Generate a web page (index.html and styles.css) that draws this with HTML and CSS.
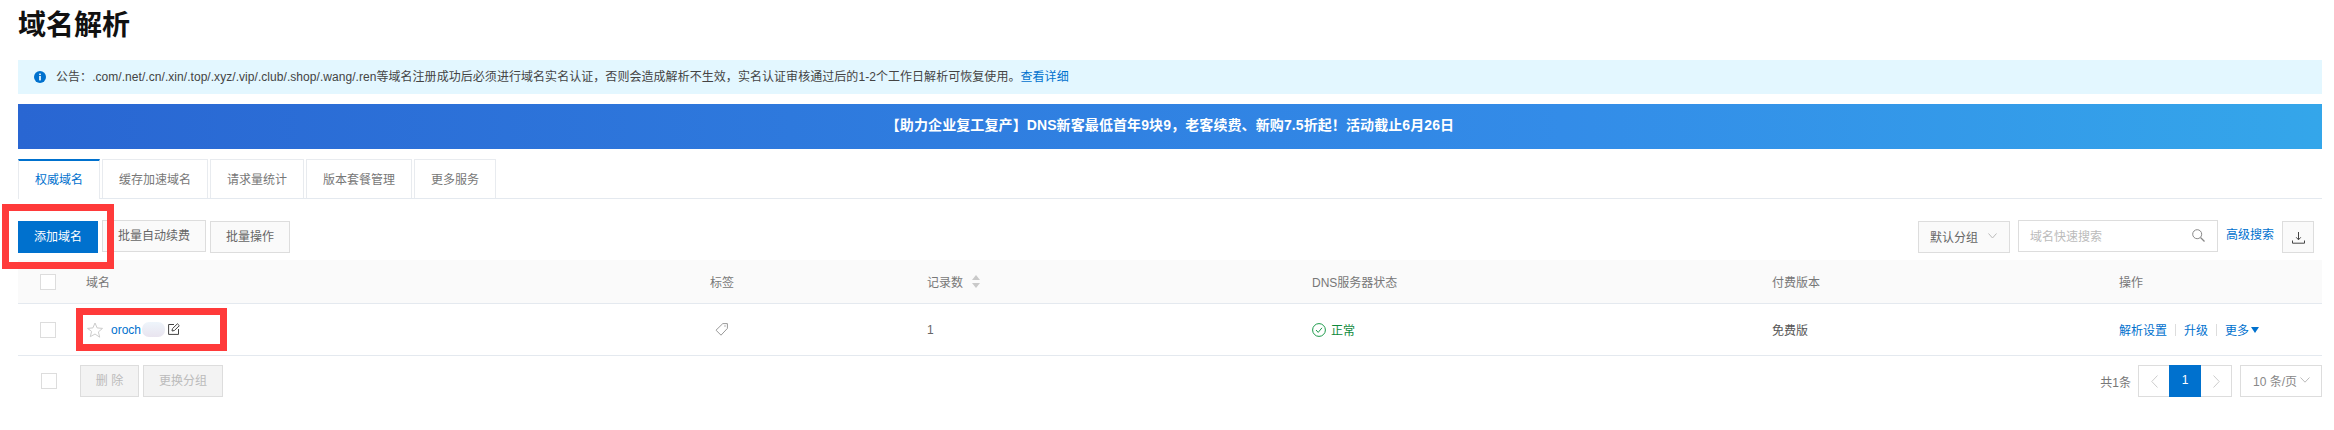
FILE: index.html
```html
<!DOCTYPE html>
<html lang="zh-CN">
<head>
<meta charset="utf-8">
<title>域名解析</title>
<link rel="stylesheet" href="styles.css">
</head>
<body>
<main class="page">
  <h1 class="title">域名解析</h1>

  <div class="notice">
    <svg class="notice-icon" width="12" height="12" viewBox="0 0 12 12"><circle cx="6" cy="6" r="6" fill="#0071ce"/><rect x="5.2" y="5" width="1.6" height="4.4" fill="#fff"/><rect x="5.2" y="2.6" width="1.6" height="1.5" fill="#fff"/></svg>
    <span>公告：.com/.net/.cn/.xin/.top/.xyz/.vip/.club/.shop/.wang/.ren等域名注册成功后必须进行域名实名认证，否则会造成解析不生效，实名认证审核通过后的1-2个工作日解析可恢复使用。<a class="link" href="#">查看详细</a></span>
  </div>

  <div class="banner">【助力企业复工复产】DNS新客最低首年9块9，老客续费、新购7.5折起！活动截止6月26日</div>

  <nav class="tabs">
    <a class="tab tab-active" href="#">权威域名</a>
    <a class="tab" href="#">缓存加速域名</a>
    <a class="tab" href="#">请求量统计</a>
    <a class="tab" href="#">版本套餐管理</a>
    <a class="tab" href="#">更多服务</a>
  </nav>

  <div class="toolbar">
    <button class="btn btn-primary">添加域名</button>
    <button class="btn btn-raised">批量自动续费</button>
    <button class="btn">批量操作</button>
    <div class="toolbar-right">
      <div class="select select-group">
        <span>默认分组</span>
        <svg width="9" height="6" viewBox="0 0 9 6"><path d="M.5.5l4 4.5 4-4.5" fill="none" stroke="#bbb"/></svg>
      </div>
      <div class="search">
        <span>域名快速搜索</span>
        <svg width="13" height="13" viewBox="0 0 13 13"><circle cx="5.2" cy="5.2" r="4.5" fill="none" stroke="#888"/><path d="M8.5 8.5l4 4" stroke="#888" stroke-width="1.2"/></svg>
      </div>
      <a class="link adv" href="#">高级搜索</a>
      <button class="btn btn-icon">
        <svg width="13" height="13" viewBox="0 0 13 13"><path d="M6.5 1v7.5M4.2 6.3l2.3 2.5 2.3-2.5" fill="none" stroke="#444"/><path d="M.5 9.5v2.7h12V9.5" fill="none" stroke="#444"/></svg>
      </button>
    </div>
  </div>

  <div class="table">
    <div class="row row-head">
      <span class="checkbox"></span>
      <span>域名</span>
      <span>标签</span>
      <span class="sortable">记录数
        <svg width="8" height="13" viewBox="0 0 8 13"><path d="M4 0l4 5H0zM4 13L0 8h8z" fill="#c9c9c9"/></svg>
      </span>
      <span>DNS服务器状态</span>
      <span>付费版本</span>
      <span>操作</span>
    </div>
    <div class="row row-body">
      <span class="checkbox"></span>
      <span class="domain">
        <svg width="16" height="16" viewBox="0 0 16 16"><path d="M8 1l2.1 4.9 5.4.5-4.1 3.5 1.3 5.3L8 12l-4.7 2.7 1.3-5.3L.5 6.4l5.4-.5z" fill="none" stroke="#ccc"/></svg>
        <a class="link domain-name" href="#">oroch</a>
        <span class="masked"></span>
        <svg class="edit-icon" width="12" height="12" viewBox="0 0 12 12"><path d="M6 1.5H.6v9.9h9.9V6" fill="none" stroke="#444"/><path d="M4 8l.5-2.4L9.4.8l1.9 1.9L6.4 7.5z" fill="none" stroke="#444"/></svg>
      </span>
      <span class="cell-icon">
        <svg width="13" height="13" viewBox="0 0 13 13"><path d="M7.8.6h4.6v4.8L6 12.2 1 7.2z" fill="none" stroke="#999"/><circle cx="10" cy="3" r=".7" fill="#999"/></svg>
      </span>
      <span>1</span>
      <span class="status">
        <svg width="14" height="14" viewBox="0 0 14 14"><circle cx="7" cy="7" r="6.4" fill="none" stroke="#1c9a4a"/><path d="M4 7l2.2 2.4L10 4.8" fill="none" stroke="#1c9a4a"/></svg>
        正常
      </span>
      <span class="plan">免费版</span>
      <span class="ops">
        <a class="link" href="#">解析设置</a><i class="sep"></i><a class="link" href="#">升级</a><i class="sep"></i><a class="link more" href="#">更多<svg width="8" height="6" viewBox="0 0 8 6"><path d="M0 0h8L4 6z" fill="#0071ce"/></svg></a>
      </span>
    </div>
  </div>

  <div class="footer">
    <span class="checkbox"></span>
    <button class="btn btn-disabled btn-delete">删 除</button>
    <button class="btn btn-disabled">更换分组</button>
    <div class="pager">
      <span class="total">共1条</span>
      <div class="pages">
        <span class="page-arrow"><svg width="7" height="13" viewBox="0 0 7 13"><path d="M6.5.5L.8 6.5l5.7 6" fill="none" stroke="#ccc"/></svg></span>
        <span class="page-num">1</span>
        <span class="page-arrow"><svg width="7" height="13" viewBox="0 0 7 13"><path d="M.5.5l5.7 6-5.7 6" fill="none" stroke="#ccc"/></svg></span>
      </div>
      <div class="select select-size">
        <span>10 条/页</span>
        <svg width="10" height="6" viewBox="0 0 10 6"><path d="M.5.5L5 5.2 9.5.5" fill="none" stroke="#bbb"/></svg>
      </div>
    </div>
  </div>

  <div class="mark mark-add"></div>
  <div class="mark mark-domain"></div>
</main>
</body>
</html>
```

FILE: styles.css
```css
* { box-sizing: border-box; }

html, body { margin: 0; background: #fff; }

body {
  font-family: "Liberation Sans", "Noto Sans CJK SC", sans-serif;
  font-size: 12px;
  color: #666;
}

.page {
  position: relative;
  padding: 0 12px 0 18px;
  height: 430px;
  overflow: hidden;
}

.title {
  margin: 0 0 11px;
  height: 49px;
  font-size: 28px;
  line-height: 51px;
  font-weight: 700;
  color: #111;
}

.link { color: #0071ce; text-decoration: none; }

.notice {
  display: flex;
  align-items: center;
  gap: 10px;
  height: 34px;
  padding-left: 16px;
  background: #e3f7ff;
  color: #444;
  line-height: 32px;
  letter-spacing: .05px;
}

.banner {
  margin-top: 10px;
  height: 45px;
  line-height: 43px;
  text-align: center;
  font-size: 14px;
  font-weight: 700;
  letter-spacing: .1px;
  color: #fff;
  background: linear-gradient(90deg, #2966d2 0%, #338ce8 67%, #34a6ea 100%);
}

.tabs {
  display: flex;
  gap: 2px;
  margin-top: 10px;
  height: 40px;
  border-bottom: 1px solid #e4e9ef;
}

.tab {
  height: 39px;
  padding: 0 16px;
  line-height: 40px;
  border: 1px solid #e8ebef;
  border-bottom: 0;
  color: #777;
  text-decoration: none;
}

.tab-active {
  height: 40px;
  border-top: 2px solid #0071ce;
  line-height: 38px;
  background: #fff;
  color: #0071ce;
}

.toolbar {
  display: flex;
  gap: 4px;
  margin-top: 21px;
  height: 33px;
  padding-top: 1px;
}

.btn {
  width: 80px;
  height: 32px;
  padding: 0 0 3px;
  border: 1px solid #ddd;
  background: #fafafa;
  color: #666;
  font: inherit;
}

.btn-primary { border-color: #0071ce; background: #0071ce; color: #fff; }
.btn-raised { width: 104px; margin-top: -1px; }
.btn-icon { display: flex; align-items: center; justify-content: center; width: 32px; padding: 0; }

.toolbar-right {
  display: flex;
  align-items: flex-start;
  margin-left: auto;
  margin-right: 8px;
}

.select {
  display: flex;
  align-items: center;
  height: 32px;
  border: 1px solid #ddd;
}

.select-group {
  justify-content: space-between;
  width: 92px;
  padding: 0 12px 2px 11px;
  background: #fafafa;
}

.search {
  display: flex;
  align-items: center;
  justify-content: space-between;
  width: 200px;
  height: 32px;
  margin: -1px 0 0 8px;
  padding: 0 12px 2px 11px;
  border: 1px solid #ddd;
  color: #bbb;
}

.adv { margin: 0 8px; line-height: 28px; }

.table { margin-top: 7px; }

.row {
  display: grid;
  grid-template-columns: 68px 624px 217px 385px 460px 347px 203px;
  align-items: center;
  border-bottom: 1px solid #e4e9ef;
}

.row-head { height: 44px; background: #fafafa; color: #777; }
.row-body { height: 52px; }

.checkbox {
  display: block;
  width: 16px;
  height: 16px;
  margin-left: 22px;
  border: 1px solid #ddd;
  background: #fff;
}

.sortable { display: flex; align-items: center; gap: 9px; }
.cell-icon { display: flex; padding-left: 5px; }

.domain {
  display: flex;
  align-items: center;
  grid-column: 2;
  margin-left: 1px;
}

.domain-name { margin-left: 8px; margin-right: 1px; }

.masked {
  width: 23px;
  height: 15px;
  margin-right: 3px;
  border-radius: 7px;
  background: linear-gradient(180deg, #eef5fb, #e9e4ef);
}

.edit-icon { margin-bottom: 2px; }

.status { display: flex; align-items: center; gap: 5px; color: #0f8a3c; }
.plan { color: #555; }

.ops { display: flex; align-items: center; }

.sep {
  width: 1px;
  height: 12px;
  margin: 0 8px;
  background: #ddd;
}

.more { display: flex; align-items: center; gap: 2px; }

.footer {
  display: flex;
  align-items: center;
  gap: 4px;
  margin-top: 9px;
}

.footer .checkbox { margin: 0 19px 0 23px; }

.btn-disabled {
  border-color: #ddd;
  background: #f3f3f3;
  color: #bbb;
}

.btn-delete { width: 59px; }

.pager {
  display: flex;
  align-items: center;
  margin-left: auto;
}

.total { margin-right: 7px; color: #777; }

.pages {
  display: flex;
  width: 94px;
  height: 32px;
  border: 1px solid #ddd;
}

.page-arrow {
  display: flex;
  flex: 1;
  align-items: center;
  justify-content: center;
}

.page-num {
  width: 32px;
  margin: -1px 0;
  line-height: 31px;
  text-align: center;
  background: #0071ce;
  color: #fff;
}

.select-size {
  justify-content: space-between;
  width: 82px;
  margin-left: 8px;
  padding: 0 11px 2px 12px;
  color: #888;
}

.mark {
  position: absolute;
  border: 7px solid #ff3a3a;
}

.mark-add { left: 2px; top: 204px; width: 112px; height: 65px; }
.mark-domain { left: 76px; top: 308px; width: 151px; height: 43px; }
```
